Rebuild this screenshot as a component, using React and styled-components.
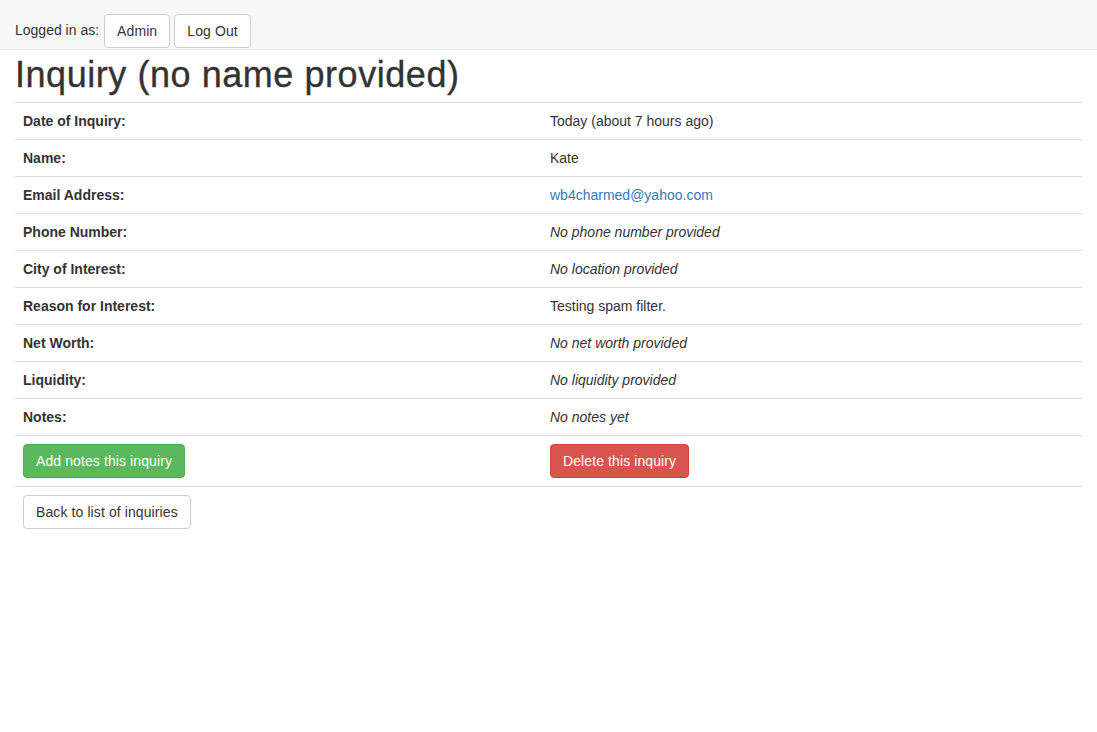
import React from "react";
import styled, { createGlobalStyle, css } from "styled-components";

const Global = createGlobalStyle`
  html, body { margin: 0; padding: 0; background: #fff; }
  body {
    font-family: "Liberation Sans", Arial, sans-serif;
    font-size: 14px;
    line-height: 20px;
    color: #333;
  }
  * { box-sizing: border-box; }
`;

const TopBar = styled.header`
  height: 50px;
  background: #f8f8f8;
  border-bottom: 1px solid #e7e7e7;
  display: flex;
  align-items: flex-end;
  padding: 0 15px 1px;
  gap: 4px;
`;

const Label = styled.span`
  align-self: center;
  margin-top: 12px;
  margin-right: 1px;
`;

const variants = {
  default: css`
    color: #333;
    background: #fff;
    border-color: #ccc;
  `,
  success: css`
    color: #fff;
    background: #5cb85c;
    border-color: #4cae4c;
  `,
  danger: css`
    color: #fff;
    background: #d9534f;
    border-color: #d43f3a;
  `,
};

const Button = styled.button`
  font-family: inherit;
  font-size: 14px;
  line-height: 20px;
  letter-spacing: 0.1px;
  padding: 6px 12px;
  border: 1px solid;
  border-radius: 4px;
  cursor: pointer;
  height: 34px;
  ${(p) => variants[p.$variant || "default"]}
`;

const Main = styled.main`
  padding: 0 15px;
`;

const Title = styled.h1`
  font-size: 36px;
  font-weight: 400;
  letter-spacing: 0.55px;
  -webkit-text-stroke: 0.35px #333;
  line-height: 1.1;
  margin: 5px 0 7px;
  color: #333;
`;

const Table = styled.div`
  display: grid;
  grid-template-columns: 527px 1fr;
  border-bottom: 1px solid #ddd;
`;

const Cell = styled.div`
  padding: 8px;
  border-top: 1px solid #ddd;
  font-weight: ${(p) => (p.$head ? 700 : 400)};
  font-style: ${(p) => (p.$empty ? "italic" : "normal")};
  min-height: 37px;
`;

const Link = styled.a`
  color: #337ab7;
  text-decoration: none;
`;

const Footer = styled.div`
  padding: 8px 8px;
`;

const rows = [
  ["Date of Inquiry:", "Today (about 7 hours ago)"],
  ["Name:", "Kate"],
  ["Email Address:", "wb4charmed@yahoo.com", "link"],
  ["Phone Number:", "No phone number provided", "empty"],
  ["City of Interest:", "No location provided", "empty"],
  ["Reason for Interest:", "Testing spam filter."],
  ["Net Worth:", "No net worth provided", "empty"],
  ["Liquidity:", "No liquidity provided", "empty"],
  ["Notes:", "No notes yet", "empty"],
];

export default function App() {
  return (
    <>
      <Global />
      <TopBar>
        <Label>Logged in as:</Label>
        <Button>Admin</Button>
        <Button>Log Out</Button>
      </TopBar>
      <Main>
        <Title>Inquiry (no name provided)</Title>
        <Table>
          {rows.map(([k, v, kind]) => (
            <React.Fragment key={k}>
              <Cell $head>{k}</Cell>
              <Cell $empty={kind === "empty"}>
                {kind === "link" ? <Link href="#">{v}</Link> : v}
              </Cell>
            </React.Fragment>
          ))}
          <Cell>
            <Button $variant="success">Add notes this inquiry</Button>
          </Cell>
          <Cell>
            <Button $variant="danger">Delete this inquiry</Button>
          </Cell>
        </Table>
        <Footer>
          <Button>Back to list of inquiries</Button>
        </Footer>
      </Main>
    </>
  );
}
